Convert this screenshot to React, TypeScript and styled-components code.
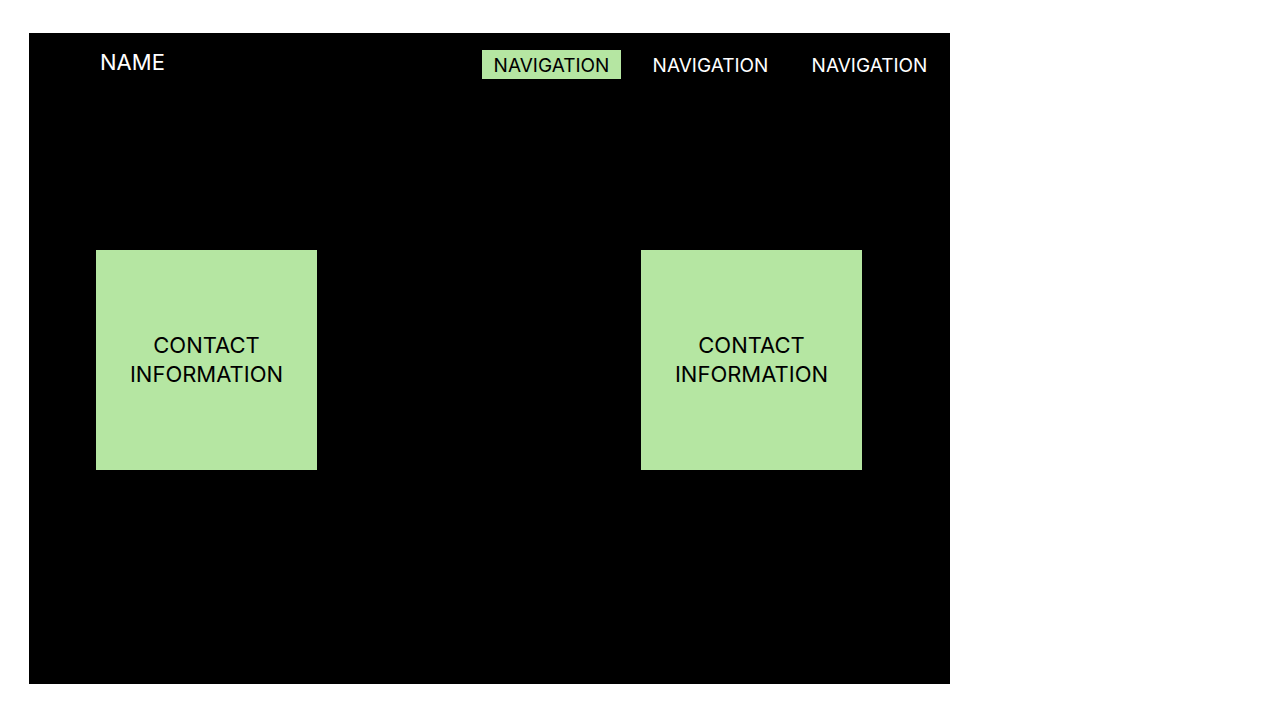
import React from 'react';
import styled, { createGlobalStyle } from 'styled-components';

const GlobalStyle = createGlobalStyle`
  html, body {
    margin: 0;
    padding: 0;
    background: #ffffff;
  }
  body {
    font-family: Inter, "Noto Sans", sans-serif;
  }
`;

const green = '#b5e6a2';

const Page = styled.div`
  padding: 33px 0 0 29px;
`;

const Panel = styled.div`
  width: 921px;
  height: 651px;
  background: #000000;
  display: flex;
  flex-direction: column;
`;

const Header = styled.header`
  display: flex;
  justify-content: space-between;
  align-items: flex-start;
  padding: 17px 11px 0 71px;
`;

const Name = styled.div`
  color: #ffffff;
  font-size: 22px;
  line-height: 24px;
`;

const Nav = styled.nav`
  display: flex;
  gap: 20px;
`;

const NavItem = styled.a<{ $active?: boolean }>`
  width: 139px;
  height: 29px;
  padding-top: 2px;
  box-sizing: border-box;
  display: flex;
  align-items: center;
  justify-content: center;
  font-size: 19px;
  color: ${(p) => (p.$active ? '#000000' : '#ffffff')};
  background: ${(p) => (p.$active ? green : 'transparent')};
  text-decoration: none;
  cursor: pointer;
`;

const Content = styled.main`
  display: flex;
  gap: 324px;
  padding: 171px 0 0 67px;
`;

const Card = styled.div`
  width: 221px;
  height: 220px;
  background: ${green};
  display: flex;
  align-items: center;
  justify-content: center;
  text-align: center;
  font-size: 22px;
  line-height: 29px;
  color: #000000;
`;

const navItems = ['NAVIGATION', 'NAVIGATION', 'NAVIGATION'];

const App = (): React.ReactElement => {
  return (
    <>
      <GlobalStyle />
      <Page>
        <Panel>
          <Header>
            <Name>NAME</Name>
            <Nav>
              {navItems.map((item, idx) => (
                <NavItem key={idx} $active={idx === 0}>
                  {item}
                </NavItem>
              ))}
            </Nav>
          </Header>
          <Content>
            <Card>
              CONTACT
              <br />
              INFORMATION
            </Card>
            <Card>
              CONTACT
              <br />
              INFORMATION
            </Card>
          </Content>
        </Panel>
      </Page>
    </>
  );
};

export default App;
